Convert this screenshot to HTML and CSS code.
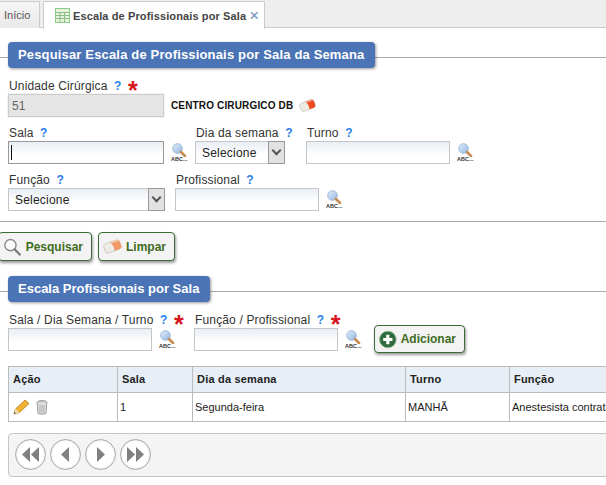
FILE: index.html
```html
<!DOCTYPE html>
<html lang="pt-BR">
<head>
    <meta charset="UTF-8">
    <meta name="viewport" content="width=device-width, initial-scale=1.0">
    <title>Escala de Profissionais por Sala</title>
    <link rel="stylesheet" href="styles.css">
</head>
<body>
    <svg class="defs" width="0" height="0">
        <defs>
            <linearGradient id="lens" x1="0" y1="0" x2="1" y2="1">
                <stop offset="0" stop-color="#e4effa"/>
                <stop offset="1" stop-color="#8fb4e0"/>
            </linearGradient>
            <g id="rubber" transform="rotate(-20 9 8)">
                <rect x="1" y="3.5" width="16" height="9" rx="2.5" fill="#efece6" stroke="#bdb9b1" stroke-width=".6"/>
                <path d="M8 3.5 H14.5 Q17 3.5 17 6 V10 Q17 12.5 14.5 12.5 H9.5 Q11 8 8 3.5 Z" fill="currentColor"/>
                <path d="M8 3.5 H14.5 Q16.4 3.5 16.8 5.2 H9 Z" fill="#fff" opacity=".4"/>
            </g>
            <g id="lookup">
                <circle cx="6.5" cy="5.5" r="4.8" fill="url(#lens)" stroke="#9dbbdc" stroke-width="1"/>
                <path d="M10 9 L14 13" stroke="#c98c52" stroke-width="2.6" stroke-linecap="round"/>
            </g>
        </defs>
    </svg>

    <nav class="tabs">
        <a class="tab tab-home">Início</a>
        <a class="tab tab-active">
            <svg class="tab-icon" width="15" height="15" viewBox="0 0 15 15">
                <rect x=".5" y=".5" width="14" height="14" fill="#e6f4dc" stroke="#8ccb8c"/>
                <path d="M1 4.5H14M1 7.5H14M1 10.5H14M5 4.5V14M9.5 4.5V14" stroke="#8cbb8c" stroke-width="1" fill="none"/>
            </svg>
            <span class="tab-title">Escala de Profissionais por Sala</span>
            <span class="tab-close">×</span>
        </a>
    </nav>

    <section class="panel panel-search">
        <h2 class="legend"><span class="legend-wide">Pesquisar Escala de Profissionais por Sala da Semana</span></h2>

        <div class="row">
            <div class="field field-lg">
                <label>Unidade Cirúrgica <b class="help">?</b> <b class="req">*</b></label>
                <input class="input input-off" type="text" value="51" readonly>
            </div>
            <strong class="unit-name">CENTRO CIRURGICO DB</strong>
            <svg class="eraser-sm" width="17" height="15" viewBox="0 0 18 16"><use href="#rubber"/></svg>
        </div>

        <div class="row">
            <div class="field field-lg">
                <label>Sala <b class="help">?</b></label>
                <span class="caret-box">
                    <input class="input input-focus" type="text">
                    <i class="caret"></i>
                </span>
            </div>
            <span class="lookup"><svg width="16" height="14" viewBox="0 0 16 14"><use href="#lookup"/></svg><em>ABC...</em></span>
            <div class="field field-dia">
                <label>Dia da semana <b class="help">?</b></label>
                <span class="select">
                    <select><option>Selecione</option></select>
                    <i class="select-btn"></i>
                </span>
            </div>
            <div class="field field-md field-turno">
                <label>Turno <b class="help">?</b></label>
                <input class="input" type="text">
            </div>
            <span class="lookup"><svg width="16" height="14" viewBox="0 0 16 14"><use href="#lookup"/></svg><em>ABC...</em></span>
        </div>

        <div class="row">
            <div class="field field-funcao">
                <label>Função <b class="help">?</b></label>
                <span class="select">
                    <select><option>Selecione</option></select>
                    <i class="select-btn"></i>
                </span>
            </div>
            <div class="field field-md field-prof">
                <label>Profissional <b class="help">?</b></label>
                <input class="input" type="text">
            </div>
            <span class="lookup"><svg width="16" height="14" viewBox="0 0 16 14"><use href="#lookup"/></svg><em>ABC...</em></span>
        </div>
    </section>

    <div class="actions">
        <button class="btn btn-search" type="button">
            <svg width="20" height="20" viewBox="0 0 20 20">
                <circle cx="8" cy="8" r="6" fill="#fafafa" stroke="#8a8a8a" stroke-width="1.5"/>
                <path d="M12.5 12.5 L18 18" stroke="#777" stroke-width="2.4" stroke-linecap="round"/>
            </svg>
            Pesquisar
        </button>
        <button class="btn btn-clear" type="button">
            <svg width="20" height="17" viewBox="0 0 18 16"><use href="#rubber"/></svg>
            Limpar
        </button>
    </div>

    <section class="panel panel-list">
        <h2 class="legend"><span>Escala Profissionais por Sala</span></h2>

        <div class="row">
            <div class="field field-md">
                <label>Sala / Dia Semana / Turno <b class="help">?</b> <b class="req">*</b></label>
                <input class="input" type="text">
            </div>
            <span class="lookup"><svg width="16" height="14" viewBox="0 0 16 14"><use href="#lookup"/></svg><em>ABC...</em></span>
            <div class="field field-md field-func-prof">
                <label>Função / Profissional <b class="help">?</b> <b class="req">*</b></label>
                <input class="input" type="text">
            </div>
            <span class="lookup"><svg width="16" height="14" viewBox="0 0 16 14"><use href="#lookup"/></svg><em>ABC...</em></span>
            <button class="btn btn-add" type="button">
                <svg width="19" height="19" viewBox="0 0 19 19">
                    <circle cx="9.5" cy="9.5" r="9" fill="#2f6b3c"/>
                    <circle cx="9.5" cy="9.5" r="9" fill="none" stroke="#9cc09f" stroke-width="1"/>
                    <path d="M9.5 4.5V14.5M4.5 9.5H14.5" stroke="#fff" stroke-width="3.4"/>
                </svg>
                Adicionar
            </button>
        </div>

        <table class="grid">
            <colgroup>
                <col class="col-acao"><col class="col-sala"><col class="col-dia"><col class="col-turno"><col class="col-func">
            </colgroup>
            <thead>
                <tr><th>Ação</th><th>Sala</th><th>Dia da semana</th><th>Turno</th><th>Função</th></tr>
            </thead>
            <tbody>
                <tr>
                    <td class="cell-actions">
                        <svg width="17" height="16" viewBox="0 0 17 16">
                            <path d="M1 15 L2.5 10 L12 1 L16 4.5 L6.5 13.5 Z" fill="#f0b030" stroke="#b07818" stroke-width=".8"/>
                            <path d="M1 15 L2.5 10 L6.5 13.5 Z" fill="#f2dcb0"/>
                            <path d="M1 15 L1.6 13 L3 14.3 Z" fill="#444"/>
                        </svg>
                        <svg width="12" height="15" viewBox="0 0 12 15">
                            <ellipse cx="6" cy="2.5" rx="4.8" ry="2" fill="#c8c8c8" stroke="#8a8a8a" stroke-width=".8"/>
                            <path d="M1.2 2.5 L2 13.5 Q6 15 10 13.5 L10.8 2.5" fill="#dedede" stroke="#8a8a8a" stroke-width=".8"/>
                            <path d="M4 5V12.5M6 5V13M8 5V12.5" stroke="#a5a5a5" stroke-width=".8"/>
                        </svg>
                    </td>
                    <td>1</td>
                    <td>Segunda-feira</td>
                    <td>MANHÃ</td>
                    <td>Anestesista contratado</td>
                </tr>
            </tbody>
        </table>

        <div class="pager">
            <a class="page-btn"><svg width="29" height="29" viewBox="0 0 29 29"><path d="M14 7 L6 14.5 L14 22 Z M23 7 L15 14.5 L23 22 Z" fill="#808080"/></svg></a>
            <a class="page-btn"><svg width="29" height="29" viewBox="0 0 29 29"><path d="M18 7 L10 14.5 L18 22 Z" fill="#808080"/></svg></a>
            <a class="page-btn"><svg width="29" height="29" viewBox="0 0 29 29"><path d="M11 7 L19 14.5 L11 22 Z" fill="#808080"/></svg></a>
            <a class="page-btn"><svg width="29" height="29" viewBox="0 0 29 29"><path d="M6 7 L14 14.5 L6 22 Z M15 7 L23 14.5 L15 22 Z" fill="#808080"/></svg></a>
        </div>
    </section>
</body>
</html>
```

FILE: styles.css
```css
html, body {
    height: 485px;
    overflow: hidden;
}
body {
    font-family: "Liberation Sans", Arial, sans-serif;
    font-size: 12px;
    color: #222;
    background-color: white;
    margin: 0;
}
.defs {
    position: absolute;
}

/* tabs */
.tabs {
    display: flex;
    height: 27px;
    background-color: #eee;
    border-bottom: 1px solid #ccc;
}
.tab {
    display: flex;
    align-items: center;
    box-sizing: border-box;
    height: 28px;
    margin-top: 1px;
    border: 1px solid #ccc;
    border-bottom: none;
}
.tab-home {
    width: 40px;
    height: 27px;
    padding-left: 4px;
    border-left: none;
    font-size: 11px;
    color: #555;
    background: linear-gradient(#f6f6f6, #e9e9e9);
}
.tab-active {
    width: 222px;
    margin-left: 3px;
    padding-left: 11px;
    color: #444;
    background-color: white;
}
.tab-icon {
    margin-right: 3px;
}
.tab-title {
    font-size: 11px;
    font-weight: bold;
    letter-spacing: .12px;
    white-space: nowrap;
}
.tab-close {
    margin-left: 3px;
    font-size: 17px;
    color: #6f94b8;
}

/* section headers */
.legend {
    position: relative;
    margin: 0;
    padding-left: 8px;
    height: 26px;
    font-size: 13px;
    line-height: 26px;
}
.legend::before {
    content: "";
    position: absolute;
    left: 0;
    right: 0;
    top: 15px;
    border-top: 1px solid #aaa;
}
.legend span {
    position: relative;
    display: inline-block;
    padding: 0 11px 0 10px;
    color: white;
    background-color: #4a74b5;
    border-radius: 4px;
    box-shadow: 1px 1px 3px rgba(0, 0, 0, .4);
}
.legend .legend-wide {
    letter-spacing: .16px;
}

/* form rows */
.panel-search {
    padding-top: 14px;
    padding-bottom: 10px;
    border-bottom: 1px solid #aaa;
}
.panel-search .row {
    margin-top: 8px;
    padding-left: 8px;
}
.panel-search .legend + .row {
    margin-top: 10px;
}
.row {
    display: flex;
    align-items: flex-end;
}
.field-lg { width: 156px; }
.field-md { width: 144px; }
.field-dia { width: 90px; margin-left: 7px; }
.field-funcao { width: 157px; }
.field-turno { margin-left: 21px; }
.field-prof { margin-left: 10px; }
.field-func-prof { margin-left: 18px; }
.field label {
    display: block;
    height: 16px;
    line-height: 16px;
    padding-left: 1px;
    font-size: 12px;
    letter-spacing: .15px;
    color: #333;
    white-space: nowrap;
}
.help {
    margin-left: 3px;
    color: #2a7fe8;
}
.req {
    margin-left: 3px;
    font-size: 25px;
    line-height: 10px;
    vertical-align: -9px;
    color: #d8141c;
}

.input {
    display: block;
    box-sizing: border-box;
    width: 100%;
    height: 23px;
    padding: 0 3px;
    font-family: inherit;
    font-size: 12px;
    border: 1px solid #c6c6c6;
    border-radius: 0;
    outline: none;
    background: linear-gradient(#e8eef5, white 60%);
}
.input-off {
    color: #666;
    border-color: #ccc;
    background: #e5e5e5;
    box-shadow: 0 0 1px #bbb;
}
.input-focus {
    border-color: #999;
}
.caret-box {
    position: relative;
    display: block;
}
.caret {
    position: absolute;
    left: 3px;
    top: 4px;
    width: 1px;
    height: 15px;
    background-color: #111;
}

.select {
    position: relative;
    display: block;
    height: 23px;
}
.select select {
    display: block;
    box-sizing: border-box;
    width: 100%;
    height: 23px;
    padding: 0 6px;
    appearance: none;
    font-family: inherit;
    font-size: 12px;
    letter-spacing: .2px;
    color: #222;
    border: 1px solid #c6c6c6;
    border-radius: 0;
    background: linear-gradient(#e8eef5, white 60%);
}
.select-btn {
    position: absolute;
    top: 0;
    right: 0;
    box-sizing: border-box;
    width: 17px;
    height: 23px;
    border: 1px solid #999;
    background-color: #e2e2e2;
}
.select-btn::after {
    content: "";
    position: absolute;
    left: 4px;
    top: 5px;
    width: 5px;
    height: 5px;
    border-right: 2px solid #555;
    border-bottom: 2px solid #555;
    transform: rotate(45deg);
}

.lookup {
    display: flex;
    flex-direction: column;
    width: 17px;
    margin-left: 7px;
    margin-bottom: 1px;
}
.lookup svg {
    display: block;
    margin-bottom: -1px;
}
.lookup em {
    display: block;
    font-size: 5.5px;
    line-height: 7px;
    font-style: normal;
    font-weight: bold;
    color: #333;
    white-space: nowrap;
}
.unit-name {
    align-self: center;
    margin: 16px 0 0 7px;
    font-size: 10px;
    letter-spacing: .15px;
    color: #111;
}
.eraser-sm {
    align-self: center;
    margin: 16px 0 0 6px;
    color: #f04a20;
}

/* buttons */
.actions {
    display: flex;
    gap: 6px;
    margin: 10px 0 0 -2px;
}
.btn {
    display: flex;
    align-items: center;
    box-sizing: border-box;
    height: 29px;
    padding: 0 8px 0 4px;
    font-family: inherit;
    font-size: 12px;
    font-weight: bold;
    color: #3f6b1e;
    background-color: #f3f3f3;
    border: 1px solid #3a6b35;
    border-radius: 4px;
    box-shadow: 1px 2px 3px rgba(0, 0, 0, .4);
}
.btn svg {
    margin-right: 4px;
}
.btn-search {
    width: 94px;
}
.btn-clear {
    width: 77px;
}
.btn-clear svg {
    color: #ee9966;
}
.btn-add {
    width: 91px;
    height: 28px;
    margin: 0 0 -2px 12px;
}

/* list */
.panel-list {
    margin-top: 15px;
}
.panel-list .row {
    margin-top: 10px;
    padding-left: 8px;
}
.grid {
    table-layout: fixed;
    width: 752px;
    margin: 15px 0 0 8px;
    border-collapse: collapse;
    font-size: 11px;
    border: 1px solid #bbb;
}
.col-acao { width: 109px; }
.col-sala { width: 75px; }
.col-dia { width: 213px; }
.col-turno { width: 104px; }
.grid th, .grid td {
    border: 1px solid #bbb;
    text-align: left;
    white-space: nowrap;
}
.grid th {
    height: 24px;
    padding: 0 4px 1px;
    font-size: 11px;
    letter-spacing: .2px;
    color: #222;
    background-color: #e7eef6;
}
.grid td {
    height: 28px;
    padding: 0 2px;
    color: #222;
}
.grid td.cell-actions {
    padding-left: 4px;
}
.cell-actions svg {
    vertical-align: middle;
    margin-right: 3px;
}
.pager {
    display: flex;
    gap: 4px;
    box-sizing: border-box;
    width: 752px;
    height: 44px;
    margin: 11px 0 0 8px;
    padding: 5px 6px;
    background-color: #f4f4f4;
    border: 1px solid #c6c6c6;
    border-radius: 4px;
}
.page-btn {
    box-sizing: border-box;
    width: 31px;
    height: 31px;
    border: 1px solid #aaa;
    border-radius: 50%;
    background-color: white;
    box-shadow: inset 0 0 2px #ccc;
}
.page-btn svg {
    display: block;
}
```
